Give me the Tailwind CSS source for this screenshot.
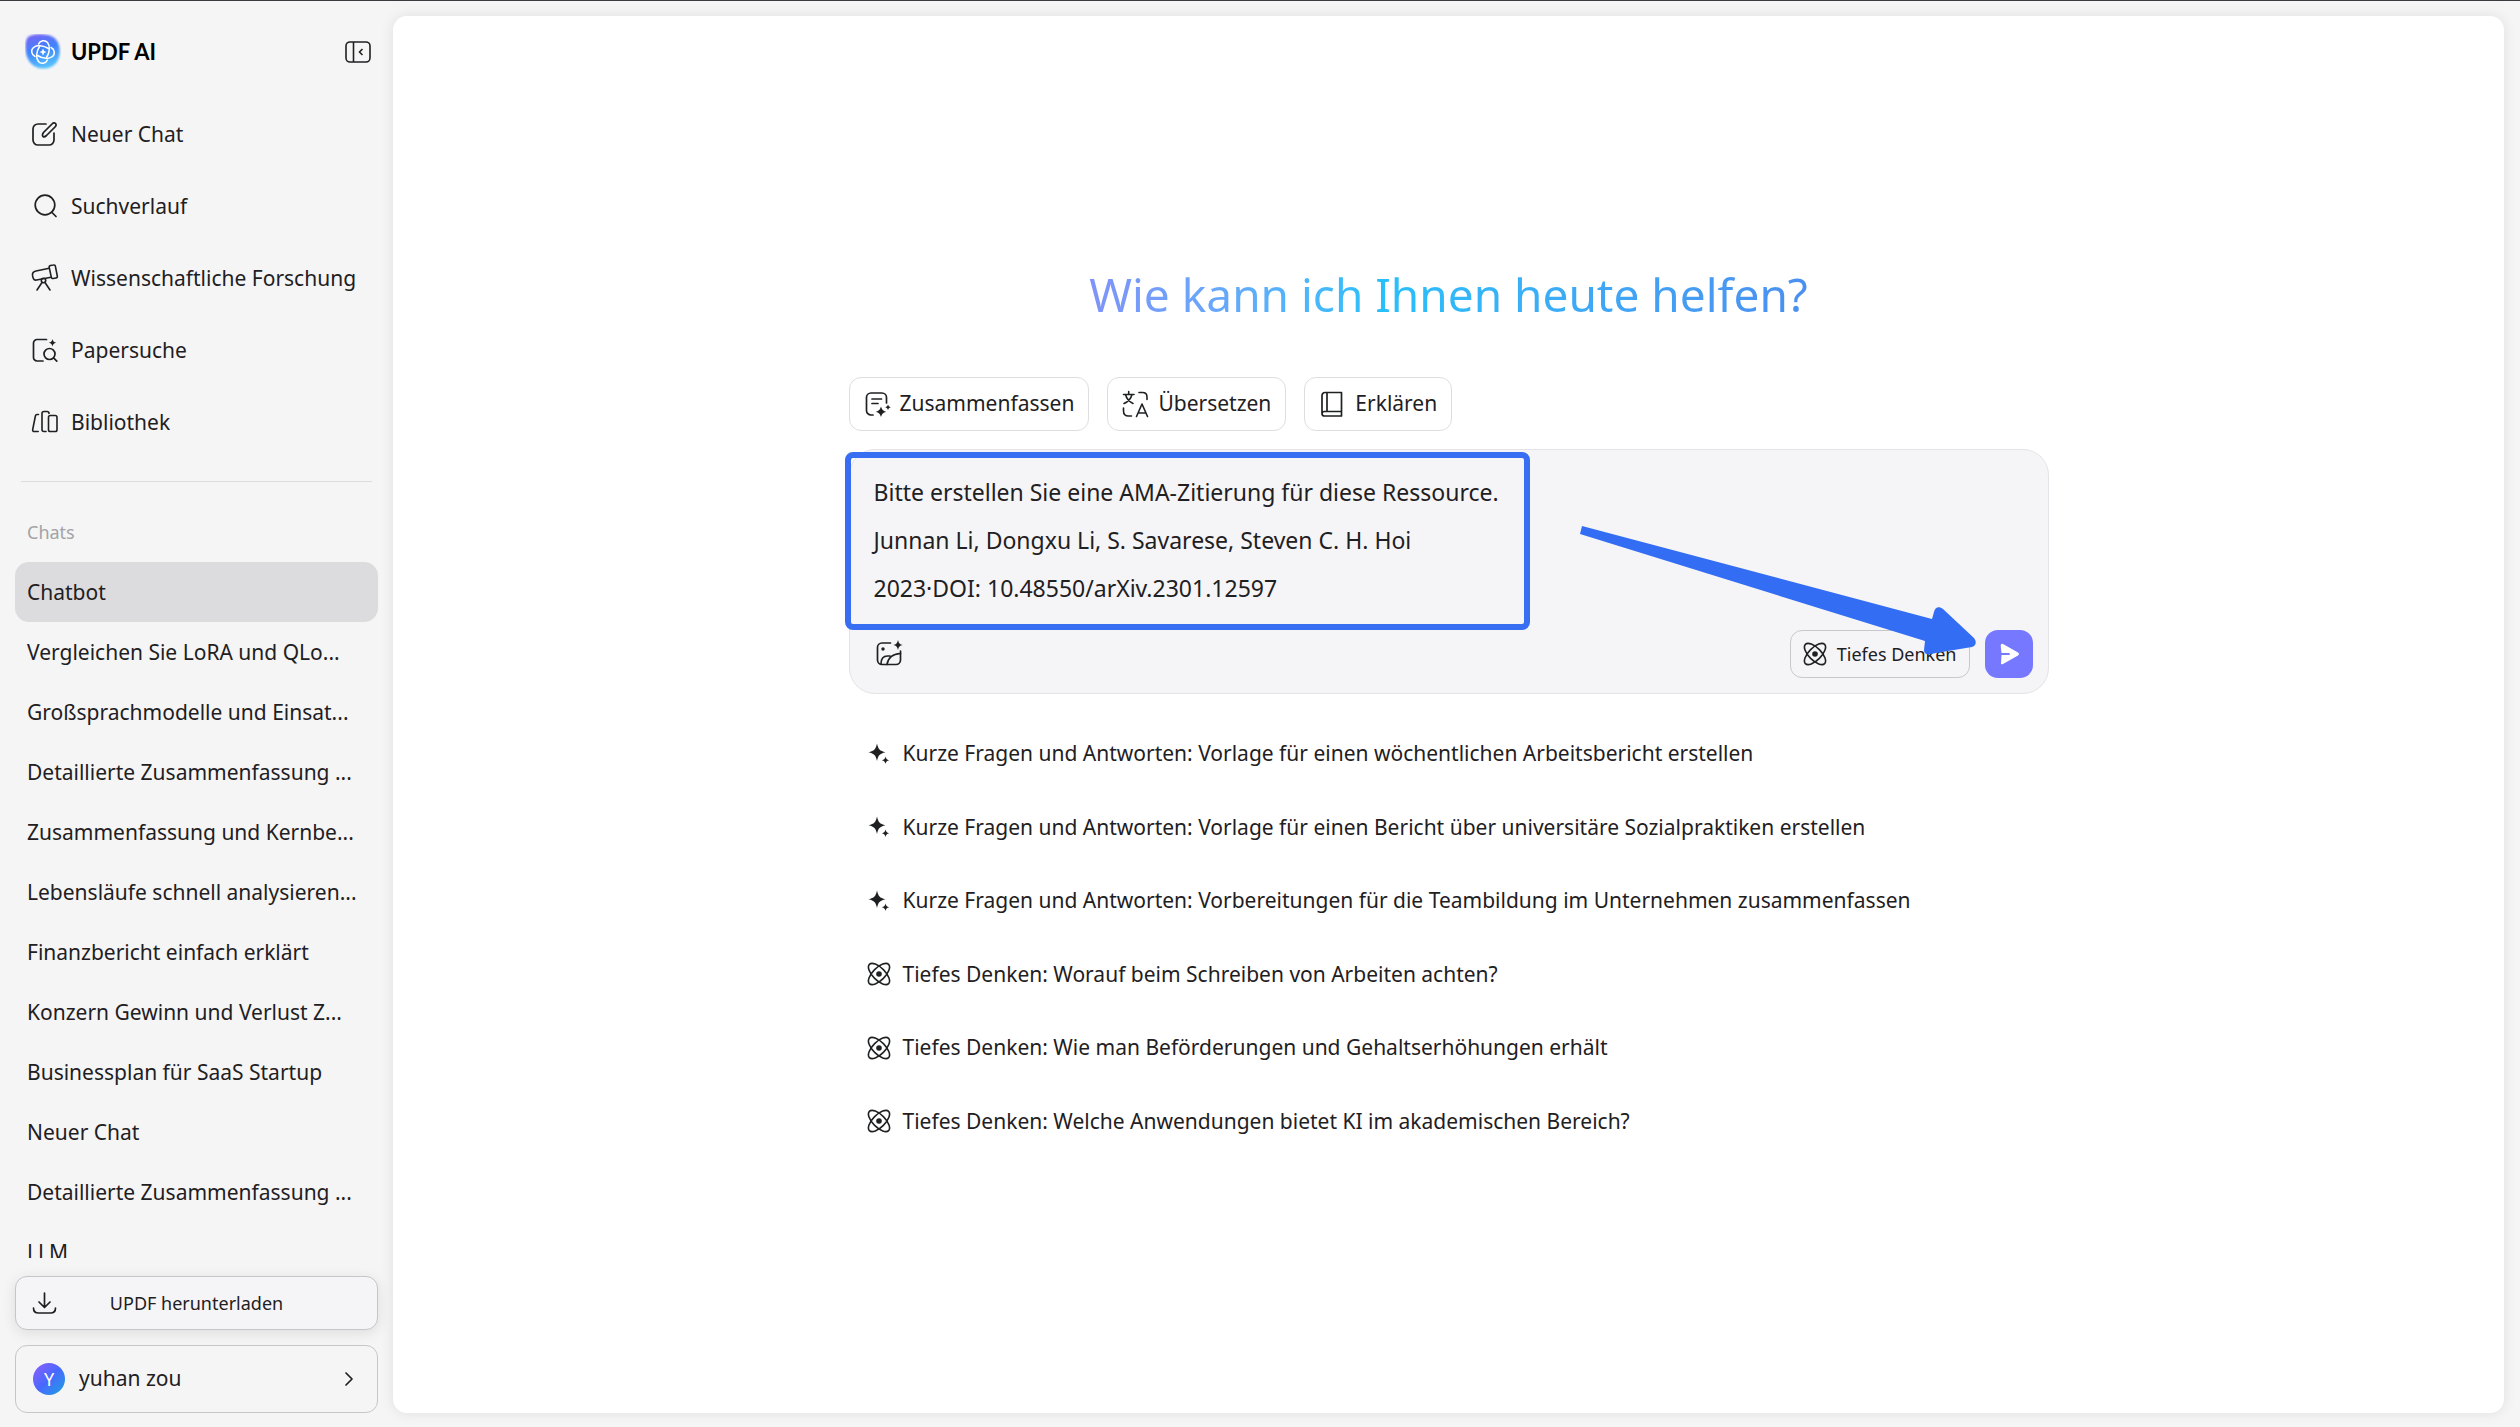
<!DOCTYPE html>
<html lang="de">
<head>
    <meta charset="UTF-8">
    <meta name="viewport" content="width=device-width, initial-scale=1.0">
    <script src="https://cdn.jsdelivr.net/npm/@tailwindcss/browser@4"></script>
    <title>UPDF AI</title>
</head>
<body class="bg-[#f5f5f6] text-[#1f2022] font-['Noto_Sans','Open_Sans',sans-serif]">
    <!-- Shared icons -->
    <svg class="hidden">
        <symbol id="atom" viewBox="0 0 24 24">
            <g fill="none" stroke="currentColor" stroke-width="1.6">
                <ellipse cx="12" cy="12" rx="13.6" ry="6.2" transform="rotate(45 12 12)" />
                <ellipse cx="12" cy="12" rx="13.6" ry="6.2" transform="rotate(-45 12 12)" />
            </g>
            <circle cx="12" cy="12" r="2.8" fill="currentColor" />
        </symbol>
        <symbol id="sparkle" viewBox="0 0 24 24">
            <path fill="currentColor" d="M10 1.500c1.300 5.800 2.600 7.300 8.500 8.800-5.900 1.500-7.200 3-8.500 8.800-1.300-5.800-2.600-7.300-8.500-8.800 5.900-1.500 7.200-3 8.500-8.800zM18.500 14.500c.6 2.500 1.200 3.100 3.700 3.700-2.500.6-3.100 1.300-3.700 3.800-.6-2.500-1.200-3.200-3.700-3.800 2.500-.6 3.100-1.200 3.700-3.700z" />
        </symbol>
    </svg>

    <div class="h-screen flex border-t border-[#3c3a3e]">
        <!-- Sidebar -->
        <aside class="w-[393px] shrink-0 flex flex-col px-[15px] pb-[14px]">
            <div class="h-[97px] pt-1 flex items-center justify-between pl-2.5 pr-1.5">
                <div class="flex items-center gap-2.5">
                    <svg class="w-9 h-9" viewBox="0 0 36 36" fill="none">
                        <defs>
                            <linearGradient id="logo" x1="0.3" y1="0" x2="0.6" y2="1">
                                <stop offset="0" stop-color="#7466f6" />
                                <stop offset="0.45" stop-color="#3f84fb" />
                                <stop offset="1" stop-color="#5ac6fd" />
                            </linearGradient>
                            <filter id="soft" x="-10%" y="-10%" width="120%" height="120%">
                                <feGaussianBlur stdDeviation="0.8" />
                            </filter>
                        </defs>
                        <path d="M7 1.200C12-.2 24-.4 29.500 4 35.500 9 36.300 20 32.500 27c-4 7-11 8-16 7.500C8 33.500 2.500 27.500 1 19 .3 13 .2 9 1.500 5.500 2.500 2.800 4.500 1.700 7 1.200z" fill="url(#logo)" filter="url(#soft)" />
                        <g stroke="#fff" stroke-width="1.5" stroke-linecap="round">
                            <path d="M13.500 10c1.500-3.500 6.500-4.500 9-1.500 2.800 3.500 2.500 9.500-1 15" />
                            <path d="M13.500 10c1.500-3.500 6.500-4.500 9-1.500 2.800 3.500 2.500 9.500-1 15" transform="rotate(90 18 18)" />
                            <path d="M13.500 10c1.500-3.500 6.500-4.500 9-1.500 2.800 3.500 2.500 9.500-1 15" transform="rotate(180 18 18)" />
                            <path d="M13.500 10c1.500-3.500 6.500-4.500 9-1.500 2.800 3.500 2.500 9.500-1 15" transform="rotate(270 18 18)" />
                        </g>
                        <path d="M18 14.500l1.100 2.400 2.400 1.100-2.400 1.100-1.100 2.400-1.100-2.400-2.400-1.100 2.400-1.100z" fill="#fff" />
                    </svg>
                    <span class="font-['Lato','Open_Sans',sans-serif] font-bold text-[22px] text-black">UPDF AI</span>
                </div>
                <button type="button" aria-label="Seitenleiste einklappen">
                    <svg class="w-7 h-7" viewBox="0 0 28 28" fill="none" stroke="currentColor" stroke-width="1.6">
                        <rect x="2" y="4" width="24" height="20" rx="4" />
                        <path d="M9.500 4v20M18.500 11l-3 3 3 3" />
                    </svg>
                </button>
            </div>

            <!-- Navigation -->
            <nav class="flex flex-col text-[21px] leading-[30px]">
                <a href="#" class="h-[72px] flex items-center gap-3 pl-4">
                    <svg class="w-7 h-7" viewBox="0 0 28 28" fill="none" stroke="currentColor" stroke-width="1.7" stroke-linecap="round">
                        <path d="M15 4H7a5 5 0 0 0-5 5v11a5 5 0 0 0 5 5h11a5 5 0 0 0 5-5v-7" />
                        <path d="M12 16.500c-1-1-.5-2.500.5-4l8.500-8.500c1-1.200 2.500-1.500 3.500-.5s.7 2.300-.5 3.500L15.500 15.500c-1 .9-2.500 1.800-3.500 1z" />
                    </svg>
                    Neuer Chat
                </a>
                <a href="#" class="h-[72px] flex items-center gap-3 pl-4">
                    <svg class="w-7 h-7" viewBox="0 0 28 28" fill="none" stroke="currentColor" stroke-width="1.7" stroke-linecap="round">
                        <circle cx="14" cy="13" r="9.800" />
                        <path d="M21 20.500l4 4" />
                    </svg>
                    Suchverlauf
                </a>
                <a href="#" class="h-[72px] flex items-center gap-3 pl-4">
                    <svg class="w-7 h-7" viewBox="0 0 28 28" fill="none" stroke="currentColor" stroke-width="1.600" stroke-linecap="round" stroke-linejoin="round">
                        <path d="M18.200 4.300L5 7c-2.500.6-3.800 2-3.500 4.200.1 1.300.4 2.300.9 3.400.6 1.300 1.800 1.700 3.200 1.400L20 13.300" />
                        <path d="M19.500 1.500l3-.5c1-.2 1.700.3 1.900 1.300l1.900 9.700c.2 1-.3 1.800-1.300 2l-2.800.5c-1 .2-1.700-.3-1.900-1.300L18.200 3.500c-.2-1 .3-1.800 1.300-2z" />
                        <circle cx="12.500" cy="16.500" r="2.200" />
                        <path d="M11 18.500L6 26M14 18.500l5 7.500" />
                    </svg>
                    Wissenschaftliche Forschung
                </a>
                <a href="#" class="h-[72px] flex items-center gap-3 pl-4">
                    <svg class="w-7 h-7" viewBox="0 0 28 28" fill="none" stroke="currentColor" stroke-width="1.700" stroke-linecap="round">
                        <path d="M15.500 3.500H6a3.500 3.500 0 0 0-3.500 3.500v14.500A3.500 3.500 0 0 0 6 25h6" />
                        <circle cx="18.500" cy="18" r="5.500" />
                        <path d="M22.800 22.200l3 3" />
                        <path fill="currentColor" stroke="none" d="M21.500 3c.6 2.500 1.200 3.100 3.700 3.700-2.500.6-3.100 1.200-3.700 3.700-.6-2.500-1.200-3.100-3.700-3.700 2.500-.6 3.100-1.200 3.700-3.700z" />
                    </svg>
                    Papersuche
                </a>
                <a href="#" class="h-[72px] flex items-center gap-3 pl-4">
                    <svg class="w-7 h-7" viewBox="0 0 28 28" fill="none" stroke="currentColor" stroke-width="1.600" stroke-linecap="round" stroke-linejoin="round">
                        <path d="M7.500 6.500H6c-1 0-1.400.5-1.600 1.500L1.700 21.500c-.2 1.200.3 2 1.500 2h4" />
                        <path d="M18 5.500c0-1.300-.7-2-2-2h-3c-1.300 0-2 .7-2 2v16c0 1.300.7 2 2 2h2" />
                        <rect x="17.500" y="7.500" width="8.500" height="16" rx="1.800" />
                    </svg>
                    Bibliothek
                </a>
            </nav>

            <hr class="mt-[23px] mx-1.5 border-[#dcdcde]">

            <!-- Chat history -->
            <h2 class="mt-[29px] pl-3 h-[42px] leading-[42px] text-[18px] text-[#a3a3a6]">Chats</h2>
            <div class="mt-[9px] flex-1 overflow-hidden text-[21px] leading-[60px]">
                <a href="#" class="block pl-3 rounded-[14px] bg-[#dcdcde] truncate">Chatbot</a>
                <a href="#" class="block pl-3 truncate">Vergleichen Sie LoRA und QLo...</a>
                <a href="#" class="block pl-3 truncate">Großsprachmodelle und Einsat...</a>
                <a href="#" class="block pl-3 truncate">Detaillierte Zusammenfassung ...</a>
                <a href="#" class="block pl-3 truncate">Zusammenfassung und Kernbe...</a>
                <a href="#" class="block pl-3 truncate">Lebensläufe schnell analysieren...</a>
                <a href="#" class="block pl-3 truncate">Finanzbericht einfach erklärt</a>
                <a href="#" class="block pl-3 truncate">Konzern Gewinn und Verlust Z...</a>
                <a href="#" class="block pl-3 truncate">Businessplan für SaaS Startup</a>
                <a href="#" class="block pl-3 truncate">Neuer Chat</a>
                <a href="#" class="block pl-3 truncate">Detaillierte Zusammenfassung ...</a>
                <a href="#" class="block pl-3 truncate">LLM</a>
            </div>

            <!-- Sidebar footer -->
            <button type="button" class="relative mt-[18px] h-[54px] shrink-0 border border-[#c6c6c9] rounded-xl bg-[#f5f5f7] shadow-[0_3px_14px_rgba(0,0,0,0.10)] text-[18px]">
                <svg class="absolute left-4 top-3 w-7 h-7" viewBox="0 0 28 28" fill="none" stroke="currentColor" stroke-width="1.700" stroke-linecap="round" stroke-linejoin="round">
                    <path d="M12.500 4v14M7 13l5.500 5.500L18 13M1.500 19c0 3.500 1.500 5 5 5h12c3.500 0 5-1.500 5-5" />
                </svg>
                UPDF herunterladen
            </button>
            <button type="button" class="mt-[15px] h-[68px] shrink-0 flex items-center gap-3.5 pl-[17px] pr-[18px] border border-[#c6c6c9] rounded-xl text-[21px]">
                <span class="w-8 h-8 rounded-full bg-linear-135 from-[#8a5cff] via-[#4668ff] to-[#009fdc] text-white text-[18px] leading-8">Y</span>
                yuhan zou
                <svg class="ml-auto w-5 h-5" viewBox="0 0 20 20" fill="none" stroke="currentColor" stroke-width="1.700" stroke-linecap="round" stroke-linejoin="round">
                    <path d="M7 4l6 6-6 6" />
                </svg>
            </button>
        </aside>

        <!-- Main -->
        <main class="flex-1 mt-[15px] mr-4 mb-[14px] rounded-[14px] bg-white shadow-[0_0_14px_rgba(0,0,0,0.09)]">
            <div class="w-[1200px] max-w-full mx-auto pt-[243px]">
                <h1 class="h-[70px] leading-[70px] text-center text-[46px]">
                    <span class="bg-linear-to-r from-[#7f93f8] via-[#27c0fa] via-40% to-[#4b8ff0] bg-clip-text text-transparent">Wie kann ich Ihnen heute helfen?</span>
                </h1>

                <div class="mt-12 flex gap-[18px] text-[21px]">
                    <button type="button" class="h-[54px] flex items-center gap-2 px-3.5 border border-[#dedee2] rounded-xl">
                        <svg class="w-7 h-7" viewBox="0 0 28 28" fill="none" stroke="currentColor" stroke-width="1.700" stroke-linecap="round">
                            <path d="M9 25H7a4.500 4.500 0 0 1-4.500-4.500v-13A4.500 4.500 0 0 1 7 3h11a4.500 4.500 0 0 1 4.500 4.500V13M8 9h9.500M8 13.500h6" />
                            <path fill="currentColor" stroke="none" d="M17 16.500c1.300 3.600 1.900 4.200 5.200 5.300-3.300 1.100-3.900 1.700-5.200 5.200-1.300-3.500-1.900-4.100-5.200-5.200 3.300-1.100 3.900-1.700 5.200-5.300zM24 14.500c.6 1.800 1 2.200 2.800 2.800-1.800.6-2.200 1-2.800 2.800-.6-1.800-1-2.200-2.800-2.800 1.800-.6 2.200-1 2.800-2.800z" />
                        </svg>
                        Zusammenfassen
                    </button>
                    <button type="button" class="h-[54px] flex items-center gap-2 px-3.5 border border-[#dedee2] rounded-xl">
                        <svg class="w-7 h-7" viewBox="0 0 28 28" fill="none" stroke="currentColor" stroke-width="1.600" stroke-linecap="round" stroke-linejoin="round">
                            <path d="M1.500 4.500h10.500M6.700 1.500v3M3.500 4.500c1 4 3.500 7 7.500 9M10 4.500c-1 4-3.500 7-8 9" />
                            <path d="M17 2.500h3.500c3 0 4.500 1.500 4.500 4.500v2.500M1.500 18v3c0 3.500 1.500 5 5 5h3M14.500 26.500l5.500-12.500 5.500 12.500M16.200 23h7.600" />
                        </svg>
                        Übersetzen
                    </button>
                    <button type="button" class="h-[54px] flex items-center gap-2 px-3.5 border border-[#dedee2] rounded-xl">
                        <svg class="w-7 h-7" viewBox="0 0 28 28" fill="none" stroke="currentColor" stroke-width="1.700" stroke-linejoin="round">
                            <path d="M6 2.500h16.500v19H5.500a2.500 2.500 0 0 0-2.500 2.200V5.500a3 3 0 0 1 3-3zM8 2.500v19M3 23.500c0 1.500 1 2.500 2.500 2.500h17v-4.500" />
                        </svg>
                        Erklären
                    </button>
                </div>

                <!-- Prompt box -->
                <form class="relative mt-[18px] border border-[#e4e4e8] rounded-[26px] bg-[#f5f5f7]">
                    <textarea aria-label="Nachricht" rows="3" class="block w-full h-[164px] px-6 pt-[18px] resize-none outline-none text-[23px] leading-[48px]">Bitte erstellen Sie eine AMA-Zitierung für diese Ressource.
Junnan Li, Dongxu Li, S. Savarese, Steven C. H. Hoi
2023·DOI: 10.48550/arXiv.2301.12597</textarea>
                    <div class="mt-4 mb-[15px] pl-[25px] pr-[15px] flex items-center">
                        <button type="button" aria-label="Bild hinzufügen">
                            <svg class="w-7 h-7" viewBox="0 0 28 28" fill="none" stroke="currentColor" stroke-width="1.700" stroke-linecap="round" stroke-linejoin="round">
                                <path d="M15.500 3H7a4.500 4.500 0 0 0-4.500 4.500V20A4.500 4.500 0 0 0 7 24.500h14a4.500 4.500 0 0 0 4.500-4.500v-9" />
                                <path d="M6 24c0-5 2-8 6.500-8h2.500M12 24.500c1-7 5-10.500 13.500-11" />
                                <circle cx="8" cy="9" r="1.700" fill="currentColor" stroke="none" />
                                <path fill="currentColor" stroke="none" d="M23 0c1 3.600 1.600 4.200 4.800 5-3.200.8-3.800 1.400-4.800 5-1-3.600-1.600-4.200-4.800-5 3.200-.8 3.800-1.400 4.800-5z" />
                            </svg>
                        </button>
                        <button type="button" class="ml-auto h-12 flex items-center gap-2.5 px-3 border border-[#c8c8cc] rounded-xl text-[18px]">
                            <svg class="w-6 h-6"><use href="#atom" /></svg>
                            Tiefes Denken
                        </button>
                        <button type="submit" aria-label="Senden" class="ml-[15px] w-12 h-12 flex items-center justify-center rounded-[13px] bg-[#7678ff]">
                            <svg class="w-6 h-6" viewBox="0 0 24 24">
                                <path fill="#fff" d="M4 2.500c.5-.8 1.300-.8 2-.4l15 8.400c1.300.8 1.300 2.200 0 3L6 21.900c-.9.5-2.200.2-2-1L4.500 13H12c1.200 0 1.200-2 0-2H4.500L3.700 4c0-.6 0-1 .3-1.500z" />
                            </svg>
                        </button>
                    </div>

                    <!-- Highlight frame and arrow -->
                    <div class="absolute -left-[5px] top-[2px] w-[685px] h-[178px] border-[6px] border-[#386ff2] rounded-lg pointer-events-none"></div>
                    <svg class="absolute left-[730px] top-[74px] w-[400px] h-[134px] pointer-events-none" viewBox="0 0 400 134">
                        <path fill="#336df3" d="M2 2L352 95l2-7c1-5 5-6 9-3l31 29c3 4 2 8-2 9l-42 7c-4 1-6-1-6-4l1-9L0 10z" />
                    </svg>
                </form>

                <!-- Suggestions -->
                <ul class="mt-[23px] pl-[18px] grid grid-rows-6 h-[441px] text-[21px]">
                    <li class="flex"><a href="#" class="flex items-center gap-3"><svg class="w-6 h-6"><use href="#sparkle" /></svg>Kurze Fragen und Antworten: Vorlage für einen wöchentlichen Arbeitsbericht erstellen</a></li>
                    <li class="flex"><a href="#" class="flex items-center gap-3"><svg class="w-6 h-6"><use href="#sparkle" /></svg>Kurze Fragen und Antworten: Vorlage für einen Bericht über universitäre Sozialpraktiken erstellen</a></li>
                    <li class="flex"><a href="#" class="flex items-center gap-3"><svg class="w-6 h-6"><use href="#sparkle" /></svg>Kurze Fragen und Antworten: Vorbereitungen für die Teambildung im Unternehmen zusammenfassen</a></li>
                    <li class="flex"><a href="#" class="flex items-center gap-3"><svg class="w-6 h-6"><use href="#atom" /></svg>Tiefes Denken: Worauf beim Schreiben von Arbeiten achten?</a></li>
                    <li class="flex"><a href="#" class="flex items-center gap-3"><svg class="w-6 h-6"><use href="#atom" /></svg>Tiefes Denken: Wie man Beförderungen und Gehaltserhöhungen erhält</a></li>
                    <li class="flex"><a href="#" class="flex items-center gap-3"><svg class="w-6 h-6"><use href="#atom" /></svg>Tiefes Denken: Welche Anwendungen bietet KI im akademischen Bereich?</a></li>
                </ul>
            </div>
        </main>
    </div>
</body>
</html>
